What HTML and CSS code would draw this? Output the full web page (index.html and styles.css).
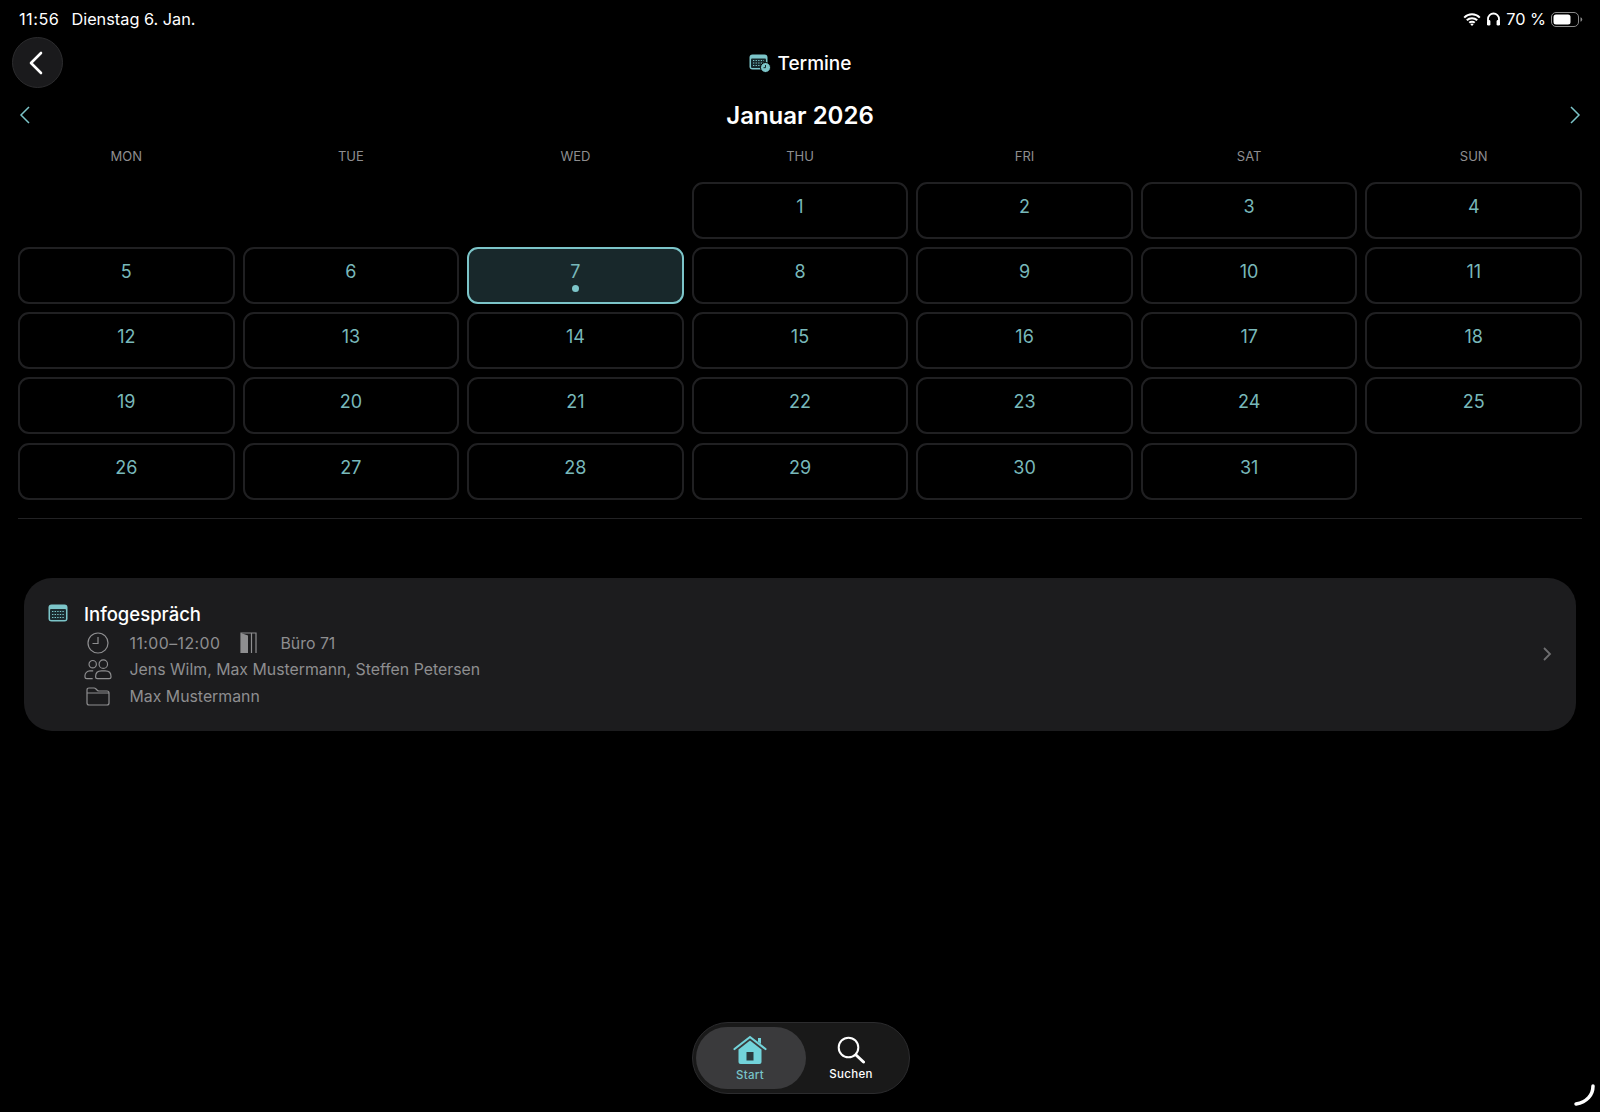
FILE: index.html
```html
<!DOCTYPE html>
<html lang="de">
<head>
  <meta charset="UTF-8">
  <title>Termine</title>
  <link rel="stylesheet" href="styles.css">
</head>
<body>

  <div class="status">
    <div class="status-left"><span class="clock">11:56</span><span>Dienstag 6. Jan.</span></div>
    <div class="status-right">
      <svg class="wifi" width="18" height="13" viewBox="0 0 18 13"><path d="M1.2 4.6a11 11 0 0 1 15.6 0M3.8 7.3a7.4 7.4 0 0 1 10.4 0M6.3 9.8a3.8 3.8 0 0 1 5.4 0" fill="none" stroke="#fff" stroke-width="2"/><path d="M9 13l-1.6-1.7a2.2 2.2 0 0 1 3.2 0z" fill="#fff"/></svg>
      <svg class="phones" width="15" height="14" viewBox="0 0 15 14"><path d="M2 9V7a5.5 5.5 0 0 1 11 0v2" fill="none" stroke="#fff" stroke-width="1.8"/><rect x="1" y="8" width="3.4" height="5.6" rx="1.4" fill="#fff"/><rect x="10.6" y="8" width="3.4" height="5.6" rx="1.4" fill="#fff"/></svg>
      <span>70 %</span>
      <svg class="battery" width="32" height="15" viewBox="0 0 32 15"><rect x="0.5" y="0.5" width="27" height="14" rx="4.5" fill="none" stroke="#8a8a8a"/><rect x="2.5" y="2.5" width="17" height="10" rx="2.5" fill="#fff"/><path d="M29.5 5.2a2.4 2.4 0 0 1 0 4.6z" fill="#8a8a8a"/></svg>
    </div>
  </div>

  <div class="header">
    <button class="back">
      <svg width="16" height="24" viewBox="0 0 16 24"><path d="M13 2L3 12l10 10" fill="none" stroke="#fff" stroke-width="2.6" stroke-linecap="round" stroke-linejoin="round"/></svg>
    </button>
    <div class="page-title">
      <svg width="22" height="20" viewBox="0 0 22 20">
        <rect x="0.5" y="1.5" width="18" height="15" rx="3" fill="#7cc5c9"/>
        <rect x="2" y="5.5" width="15" height="9.5" rx="1" fill="#16282b"/>
        <path d="M4 7.5h11M4 10h11M4 12.5h8" stroke="#7cc5c9" stroke-width="1" stroke-dasharray="1.3 1.3"/>
        <circle cx="16.5" cy="14.5" r="5" fill="#7cc5c9" stroke="#000"/>
        <path d="M16.5 12v2.7h-2" fill="none" stroke="#16282b" stroke-width="1"/>
      </svg>
      <span>Termine</span>
    </div>
  </div>

  <div class="month">
    <svg width="12" height="18" viewBox="0 0 12 18"><path d="M10 1L2 9l8 8" fill="none" stroke="#7cc5c9" stroke-width="1.5"/></svg>
    <h1>Januar 2026</h1>
    <svg width="12" height="18" viewBox="0 0 12 18"><path d="M2 1l8 8-8 8" fill="none" stroke="#7cc5c9" stroke-width="1.5"/></svg>
  </div>

  <div class="weekdays">
    <div>MON</div><div>TUE</div><div>WED</div><div>THU</div><div>FRI</div><div>SAT</div><div>SUN</div>
  </div>

  <div class="days">
    <div class="day empty"></div>
    <div class="day empty"></div>
    <div class="day empty"></div>
    <div class="day">1</div>
    <div class="day">2</div>
    <div class="day">3</div>
    <div class="day">4</div>
    <div class="day">5</div>
    <div class="day">6</div>
    <div class="day today">7<span class="dot"></span></div>
    <div class="day">8</div>
    <div class="day">9</div>
    <div class="day">10</div>
    <div class="day">11</div>
    <div class="day">12</div>
    <div class="day">13</div>
    <div class="day">14</div>
    <div class="day">15</div>
    <div class="day">16</div>
    <div class="day">17</div>
    <div class="day">18</div>
    <div class="day">19</div>
    <div class="day">20</div>
    <div class="day">21</div>
    <div class="day">22</div>
    <div class="day">23</div>
    <div class="day">24</div>
    <div class="day">25</div>
    <div class="day">26</div>
    <div class="day">27</div>
    <div class="day">28</div>
    <div class="day">29</div>
    <div class="day">30</div>
    <div class="day">31</div>
  </div>

  <div class="divider"></div>

  <div class="card">
    <svg class="card-cal" width="20" height="18" viewBox="0 0 20 18">
      <rect x="0.5" y="0.5" width="19" height="17" rx="3" fill="#7cc5c9"/>
      <rect x="2" y="5" width="16" height="11" rx="1" fill="#1b2c30"/>
      <path d="M4 7.5h12M4 10.5h12M4 13.5h12" stroke="#7cc5c9" stroke-width="1.1" stroke-dasharray="1.4 1.2"/>
    </svg>
    <div class="card-body">
      <div class="card-title">Infogespräch</div>
      <div class="card-row">
        <div class="row-icon">
          <svg width="22" height="22" viewBox="0 0 22 22"><circle cx="11" cy="11" r="10" fill="none" stroke="#8e8e90" stroke-width="1.2"/><path d="M11 5v6.5H5.5" fill="none" stroke="#8e8e90" stroke-width="1.2"/></svg>
        </div>
        <span class="time">11:00–12:00</span>
        <svg class="door" width="17" height="22" viewBox="0 0 17 22"><path d="M1 21V1h15v20M11.5 1v20" fill="none" stroke="#8e8e90" stroke-width="1.2"/><path d="M1 1l7 2.5V21H1z" fill="#8e8e90"/></svg>
        <span>Büro 71</span>
      </div>
      <div class="card-row">
        <div class="row-icon">
          <svg width="29" height="21" viewBox="0 0 29 21"><g fill="none" stroke="#8e8e90" stroke-width="1.2"><circle cx="9" cy="5" r="3.8"/><circle cx="20" cy="5" r="4.4"/><path d="M9.5 12H6a5 5 0 0 0-5 5v1q0 2 2 2h6"/><path d="M14 20h12q2 0 2-2 0-6-6-6h-4q-6 0-6 6 0 2 2 2z"/></g></svg>
        </div>
        <span>Jens Wilm, Max Mustermann, Steffen Petersen</span>
      </div>
      <div class="card-row">
        <div class="row-icon">
          <svg width="24" height="19" viewBox="0 0 24 19"><path d="M1 4V3q0-2 2-2h5q1 0 2 1l1.500 1.500q.5.500 1.500.500H21q2 0 2 2v10q0 2-2 2H3q-2 0-2-2zM1 6h22" fill="none" stroke="#8e8e90" stroke-width="1.2"/></svg>
        </div>
        <span>Max Mustermann</span>
      </div>
    </div>
    <svg class="card-arrow" width="10" height="16" viewBox="0 0 10 16"><path d="M2 2l6 6-6 6" fill="none" stroke="#6e6e70" stroke-width="1.8"/></svg>
  </div>

  <div class="tabbar">
    <div class="tab active">
      <svg width="34" height="30" viewBox="0 0 34 30">
        <path d="M1.500 14L17 2l15.500 12" fill="none" stroke="#72d3da" stroke-width="2.200" stroke-linecap="round" stroke-linejoin="round"/>
        <path d="M25 3h3v6l-3-2.200z" fill="#72d3da"/>
        <path d="M5.500 14.500L17 5.500l11.500 9V27q0 2-2 2h-19q-2 0-2-2z" fill="#72d3da"/>
        <rect x="13.500" y="17" width="7" height="8.500" fill="#2a3a3d"/>
      </svg>
      <span>Start</span>
    </div>
    <div class="tab">
      <svg width="28" height="28" viewBox="0 0 28 28"><circle cx="11.500" cy="11.500" r="9.800" fill="none" stroke="#fff" stroke-width="2"/><path d="M19 19l7.500 7" stroke="#fff" stroke-width="3" stroke-linecap="round"/></svg>
      <span>Suchen</span>
    </div>
  </div>

  <svg class="corner" width="24" height="24" viewBox="0 0 24 24"><path d="M21 3c0 9-6 16-17 18" fill="none" stroke="#fff" stroke-width="3.500" stroke-linecap="round"/></svg>

</body>
</html>
```

FILE: styles.css
```css
:root {
  --teal: #7cc5c9;
  --muted: #8e8e90;
  --cell-border: #202022;
}

html, body {
  height: 100%;
}

body {
  margin: 0;
  background: #000;
  color: #fff;
  font-family: Inter, "Liberation Sans", sans-serif;
  position: relative;
  overflow: hidden;
}

.status {
  display: flex;
  justify-content: space-between;
  align-items: center;
  height: 38px;
  padding: 0 17px 0 19px;
  font-size: 16.300px;
}

.status-left {
  display: flex;
  gap: 12px;
}

.clock {
  letter-spacing: 0.5px;
}

.status-right {
  display: flex;
  align-items: center;
  gap: 5px;
}

.header {
  display: flex;
  align-items: center;
  justify-content: center;
  height: 50px;
  position: relative;
}

.back {
  position: absolute;
  left: 12px;
  top: -1px;
  width: 51px;
  height: 51px;
  padding: 0 4px 0 0;
  display: flex;
  align-items: center;
  justify-content: center;
  background: #1a1a1c;
  border: 1px solid #2c2c2e;
  border-radius: 50%;
}

.page-title {
  display: flex;
  align-items: center;
  gap: 7px;
  font-size: 19px;
  font-weight: 500;
}

.month {
  display: flex;
  align-items: center;
  justify-content: space-between;
  height: 54px;
  padding: 0 19px;
}

.month h1 {
  margin: 0;
  font-size: 24px;
  font-weight: 600;
}

.weekdays, .days {
  display: grid;
  grid-template-columns: repeat(7, 1fr);
  column-gap: 8px;
  padding: 0 18px;
}

.weekdays {
  height: 27px;
  align-items: center;
  margin-bottom: 12.500px;
  text-align: center;
  font-size: 13px;
  color: var(--muted);
}

.days {
  grid-auto-rows: 57px;
  row-gap: 8.300px;
}

.day {
  box-sizing: border-box;
  padding-top: 12px;
  text-align: center;
  font-size: 18px;
  line-height: 22px;
  color: #78b8ba;
  border: 2px solid var(--cell-border);
  border-radius: 11px;
  position: relative;
}

.day.empty {
  border: none;
}

.day.today {
  background: #18282b;
  border-color: var(--teal);
}

.dot {
  position: absolute;
  left: 50%;
  bottom: 10px;
  width: 7px;
  height: 7px;
  margin-left: -3.500px;
  border-radius: 50%;
  background: var(--teal);
}

.divider {
  height: 1px;
  margin: 18.500px 18px 0;
  background: #222224;
}

.card {
  display: flex;
  align-items: flex-start;
  margin: 59px 24px 0;
  height: 153px;
  box-sizing: border-box;
  padding: 26px 0 0 24px;
  background: #1c1c1e;
  border-radius: 28px;
  position: relative;
}

.card-cal {
  margin-right: 16px;
}

.card-body {
  flex: 1;
}

.card-title {
  font-size: 18.500px;
  font-weight: 500;
  line-height: 20px;
  margin-bottom: 6px;
}

.card-row {
  display: flex;
  align-items: center;
  height: 26.500px;
  font-size: 15.850px;
  color: var(--muted);
}

.time {
  letter-spacing: 0.450px;
}

.row-icon {
  width: 28px;
  margin-right: 17.500px;
  display: flex;
  justify-content: center;
}

.door {
  margin: 0 23px 0 20px;
}

.card-arrow {
  position: absolute;
  right: 24px;
  top: 68px;
}

.tabbar {
  position: absolute;
  left: 692px;
  top: 1022px;
  width: 218px;
  height: 72px;
  box-sizing: border-box;
  padding: 4px 13px 4px 3px;
  display: flex;
  background: #191919;
  border: 1px solid #2c2c2e;
  border-radius: 36px;
}

.tab {
  flex: 1;
  display: flex;
  flex-direction: column;
  align-items: center;
  justify-content: center;
  gap: 3px;
  padding-top: 1px;
  font-size: 11.500px;
  font-weight: 500;
  letter-spacing: 0.3px;
  border-radius: 32px;
}

.tab.active {
  flex: none;
  box-sizing: border-box;
  width: 110px;
  padding-right: 2px;
  background: #3a3a3c;
  color: #78c4c8;
}

.corner {
  position: absolute;
  right: 4px;
  bottom: 5px;
}
```
